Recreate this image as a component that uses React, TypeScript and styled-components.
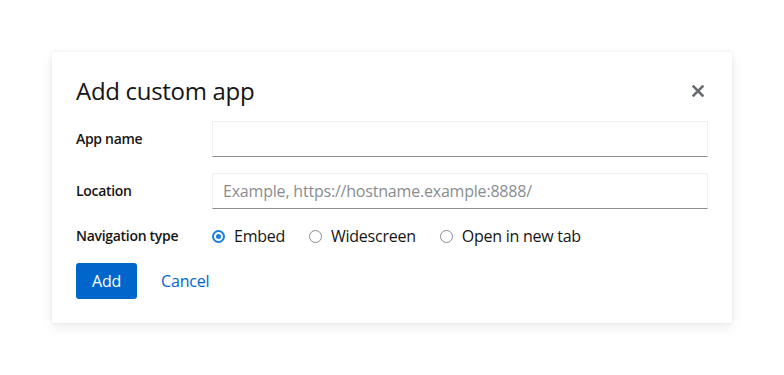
import React, { useState } from "react";
import styled, { createGlobalStyle } from "styled-components";

const GlobalStyle = createGlobalStyle`
  body {
    margin: 0;
    background: #fff;
    font-family: "Open Sans", "Noto Sans", sans-serif;
    color: #151515;
  }
  * { box-sizing: border-box; }
`;

const Page = styled.div`
  padding: 52px;
`;

const Modal = styled.div`
  width: 680px;
  background: #fff;
  box-shadow: 0 4px 12px rgba(3, 3, 3, 0.08), 0 0 4px rgba(3, 3, 3, 0.05);
  padding: 24px;
`;

const Header = styled.div`
  display: flex;
  align-items: center;
  justify-content: space-between;
  margin-bottom: 15px;
`;

const Title = styled.h1`
  margin: 0;
  font-size: 24px;
  line-height: 30px;
  font-weight: 400;
  letter-spacing: -0.3px;
`;

const CloseButton = styled.button`
  border: 0;
  background: none;
  padding: 0;
  margin-right: 2px;
  width: 16px;
  height: 16px;
  display: flex;
  align-items: center;
  justify-content: center;
  cursor: pointer;
`;

const Form = styled.form`
  display: grid;
  grid-template-columns: 120px 1fr;
  column-gap: 16px;
  row-gap: 16px;
  align-items: center;
`;

const Label = styled.label`
  font-size: 14px;
  font-weight: 600;
  line-height: 20px;
  letter-spacing: -0.3px;
`;

const Input = styled.input`
  height: 36px;
  width: 100%;
  border: 1px solid #f0f0f0;
  border-bottom-color: #8a8d90;
  padding: 0 10px;
  font-family: inherit;
  font-size: 16px;
  letter-spacing: -0.2px;
  color: #151515;
  outline: none;
  &::placeholder {
    color: #8a8d90;
  }
`;

const RadioGroup = styled.div`
  display: flex;
  gap: 24px;
  align-items: center;
`;

const RadioOption = styled.label`
  display: flex;
  align-items: center;
  gap: 9px;
  font-size: 16px;
  line-height: 22px;
  letter-spacing: -0.25px;
  cursor: pointer;
`;

const RadioCircle = styled.span<{ checked: boolean }>`
  width: 13px;
  height: 13px;
  border-radius: 50%;
  border: ${(p) => (p.checked ? "2px solid #1a7de2" : "1.5px solid #8a8d90")};
  display: flex;
  align-items: center;
  justify-content: center;
  &::after {
    content: "";
    width: 5px;
    height: 5px;
    border-radius: 50%;
    background: ${(p) => (p.checked ? "#1a7de2" : "transparent")};
  }
`;

const Actions = styled.div`
  display: flex;
  align-items: center;
  gap: 8px;
  margin-top: 16px;
`;

const Button = styled.button<{ variant: "primary" | "link" }>`
  height: 36px;
  padding: 0 16px;
  border: 0;
  border-radius: 3px;
  font-family: inherit;
  font-size: 16px;
  letter-spacing: -0.2px;
  cursor: pointer;
  background: ${(p) => (p.variant === "primary" ? "#0066cc" : "transparent")};
  color: ${(p) => (p.variant === "primary" ? "#fff" : "#0066cc")};
`;

const options = ["Embed", "Widescreen", "Open in new tab"];

export default function App() {
  const [nav, setNav] = useState("Embed");

  return (
    <>
      <GlobalStyle />
      <Page>
        <Modal>
          <Header>
            <Title>Add custom app</Title>
            <CloseButton aria-label="Close">
              <svg width="12" height="12" viewBox="0 0 12 12">
                <path d="M1.5 1.5 L10.5 10.5 M10.5 1.5 L1.5 10.5" stroke="#6a6e73" strokeWidth="2.6" strokeLinecap="square" />
              </svg>
            </CloseButton>
          </Header>
          <Form onSubmit={(e) => e.preventDefault()}>
            <Label>App name</Label>
            <Input type="text" />
            <Label>Location</Label>
            <Input type="text" placeholder="Example, https://hostname.example:8888/" />
            <Label>Navigation type</Label>
            <RadioGroup>
              {options.map((o) => (
                <RadioOption key={o} onClick={() => setNav(o)}>
                  <RadioCircle checked={nav === o} />
                  {o}
                </RadioOption>
              ))}
            </RadioGroup>
          </Form>
          <Actions>
            <Button variant="primary">Add</Button>
            <Button variant="link">Cancel</Button>
          </Actions>
        </Modal>
      </Page>
    </>
  );
}
